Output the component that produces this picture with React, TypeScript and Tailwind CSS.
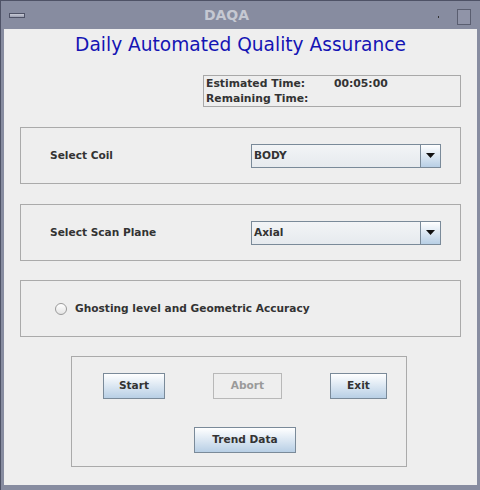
import React from 'react';

const font = { fontFamily: '"DejaVu Sans", "Liberation Sans", sans-serif' };

function MetalButton({ label, width, disabled }: { label: string; width: string; disabled?: boolean }) {
  if (disabled) {
    return (
      <div className={`${width} h-[26px] flex items-center justify-center border border-[#b8b8b8] bg-[#eeeeee] text-[10.6px] font-bold text-[#9a9a9a]`}>
        {label}
      </div>
    );
  }
  return (
    <div className={`${width} h-[26px] flex items-center justify-center border border-[#7a8a99] bg-gradient-to-b from-[#ffffff] to-[#b8cfe5] text-[10.6px] font-bold text-[#333333]`}>
      {label}
    </div>
  );
}

function Combo({ value }: { value: string }) {
  return (
    <div className="ml-auto mr-[19px] w-[190px] h-[24px] flex border border-[#7a8a99] bg-gradient-to-b from-[#f2f4f6] to-[#e6eaee]">
      <div className="flex-1 flex items-center pl-[2px] text-[10.6px] font-bold text-[#333333]">{value}</div>
      <div className="w-[20px] border-l border-[#7a8a99] bg-gradient-to-b from-[#ffffff] to-[#b8cfe5] flex items-center justify-center">
        <svg width="9" height="5" viewBox="0 0 9 5">
          <path d="M0 0h9L4.5 5z" fill="#111" />
        </svg>
      </div>
    </div>
  );
}

export default function App() {
  return (
    <div style={font} className="w-[480px] h-[490px] flex flex-col bg-[#878ca0] border-t border-l border-[#4e5266]">
      {/* Title bar */}
      <div className="h-[28px] relative flex items-center justify-center shrink-0">
        <div className="absolute left-[8px] top-[12px] w-[16px] h-[5px] border border-[#4e5266] bg-gradient-to-b from-[#c8cbd6] to-[#9a9eb0]" />
        <span className="text-[14px] font-bold text-[#c5c8d2] mr-[28px]">DAQA</span>
        <div className="absolute left-[437px] top-[15px] w-[1px] h-[2px] bg-[#333]" />
        <div className="absolute left-[456px] top-[8px] w-[14px] h-[16px] border border-[#5a5e70] bg-[#9094a8]" />
      </div>

      {/* Content */}
      <div className="flex-1 ml-[3px] mr-[3px] mb-[5px] bg-[#eeeeee] flex flex-col px-[16px]">
        <div className="pt-[2px] text-[18.6px] leading-[28px] text-center text-[#1414b4]">
          Daily Automated Quality Assurance
        </div>

        <div className="mt-[16px] ml-auto w-[258px] h-[32px] border border-[#a8a8a8] pl-[2px] text-[10.8px] font-bold text-[#333333] leading-[15px]">
          <div className="flex">
            <span className="w-[128px]">Estimated Time:</span>
            <span>00:05:00</span>
          </div>
          <div>Remaining Time:</div>
        </div>

        <div className="mt-[20px] h-[57px] border border-[#aaaaaa] flex items-center pl-[29px]">
          <span className="text-[10.6px] font-bold text-[#333333]">Select Coil</span>
          <Combo value="BODY" />
        </div>

        <div className="mt-[20px] h-[57px] border border-[#aaaaaa] flex items-center pl-[29px]">
          <span className="text-[10.6px] font-bold text-[#333333]">Select Scan Plane</span>
          <Combo value="Axial" />
        </div>

        <div className="mt-[19px] h-[57px] border border-[#aaaaaa] flex items-center pl-[34px]">
          <div className="w-[12px] h-[12px] rounded-full border border-[#9a9a9a] bg-gradient-to-b from-[#ffffff] to-[#e4e4e4]" />
          <span className="ml-[8px] text-[10.6px] font-bold text-[#333333]">Ghosting level and Geometric Accuracy</span>
        </div>

        <div className="mt-[19px] ml-[51px] w-[336px] h-[111px] border border-[#aaaaaa] flex flex-col pt-[16px]">
          <div className="flex pl-[31px] gap-[48px]">
            <MetalButton label="Start" width="w-[62px]" />
            <MetalButton label="Abort" width="w-[69px]" disabled />
            <MetalButton label="Exit" width="w-[57px]" />
          </div>
          <div className="mt-[28px] ml-[122px]">
            <MetalButton label="Trend Data" width="w-[102px]" />
          </div>
        </div>
      </div>
    </div>
  );
}
